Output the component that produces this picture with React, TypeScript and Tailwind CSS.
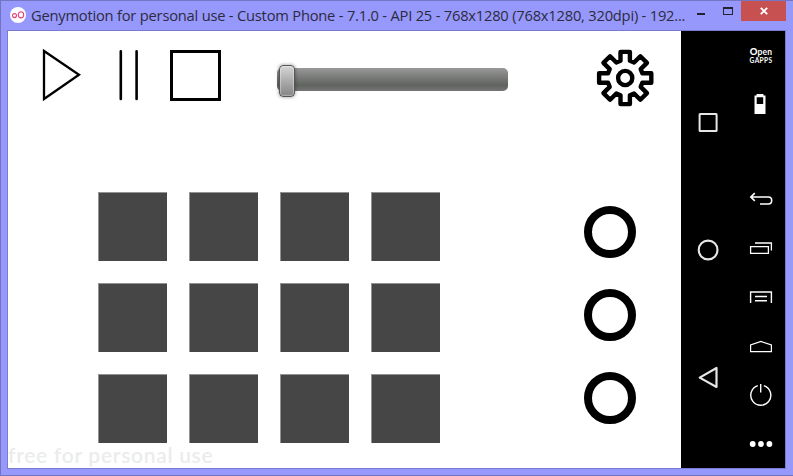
import type { ReactNode } from "react";

const gearPath = (() => {
  const tooth = [
    [-4.7, -17.2],
    [-4.7, -26.1],
    [4.7, -26.1],
    [4.7, -17.2],
  ];
  const points: string[] = [];
  for (let i = 0; i < 8; i++) {
    const a = (i * Math.PI) / 4;
    for (const [x, y] of tooth) {
      points.push(
        `${(x * Math.cos(a) - y * Math.sin(a)).toFixed(2)} ${(x * Math.sin(a) + y * Math.cos(a)).toFixed(2)}`,
      );
    }
  }
  return `M${points.join("L")}Z`;
})();

function TitleBar() {
  return (
    <header className="flex h-[30px] shrink-0 border-t border-[#7476c4] bg-[#9798fb] pr-[7px]">
      <svg className="ml-[9px] mt-[6px] h-[17px] w-[17px] shrink-0" viewBox="0 0 17 17" fill="none">
        <circle cx="8" cy="8" r="8" fill="#fff" />
        <circle cx="4.5" cy="8.6" r="2" stroke="#e6417b" strokeWidth="1.1" />
        <ellipse cx="11" cy="7.8" rx="2.7" ry="3.1" stroke="#e6417b" strokeWidth="1.1" />
      </svg>
      <h1 className="ml-[4px] mt-[3px] h-[22px] w-[660px] shrink-0 whitespace-nowrap text-[14.7px] leading-[22px] tracking-[-0.21px] text-[#2b2b3f]">
        Genymotion for personal use - Custom Phone - 7.1.0 - API 25 - 768x1280 (768x1280, 320dpi) - 192...
      </h1>
      <div className="ml-[6px] mt-[12px] h-[2px] w-[8px] shrink-0 bg-[#23232f]" />
      <div className="ml-[18px] mt-[6px] h-[8px] w-[10px] shrink-0 border border-t-2 border-[#23232f]" />
      <div className="ml-auto flex h-[20px] w-[45px] shrink-0 items-center justify-center bg-[#c75050]">
        <svg className="h-[8px] w-[8px]" viewBox="0 0 8 8" stroke="#fff" strokeWidth="1.9">
          <path d="M.8 .8L7.2 7.2M7.2 .8L.8 7.2" />
        </svg>
      </div>
    </header>
  );
}

function Slider() {
  return (
    <div className="ml-[56px] mt-[37px] flex h-[23px] w-[231px] items-center rounded-[5px] bg-linear-to-b from-[#999] via-[#60635f] via-75% to-[#747674] pl-[2px]">
      <div className="mt-[2px] h-[32px] w-[16px] shrink-0 rounded-[4px] border border-[#555] bg-linear-to-b from-[#d5d5d5] to-[#858585] shadow-[0_0_3px_1px_rgba(0,0,0,0.25),inset_0_0_1px_1px_rgba(255,255,255,0.35)]" />
    </div>
  );
}

function Transport() {
  return (
    <div className="flex h-[161px] shrink-0">
      <svg className="ml-[33px] mt-[16px] h-[56px] w-[42px]" viewBox="0 0 42 56" fill="none" stroke="#000" strokeWidth="2.3">
        <path d="M3 4V52L38 27.7Z" />
      </svg>
      <svg className="ml-[35px] mt-[18px] h-[52px] w-[22px]" viewBox="0 0 22 52" fill="none" stroke="#000" strokeWidth="2.6" strokeLinecap="round">
        <path d="M2.8 2.3V50M18.6 2.3V50" />
      </svg>
      <div className="ml-[30px] mt-[19px] h-[51px] w-[51px] border-3 border-black" />
      <Slider />
      <svg className="ml-[87px] mt-[17px] h-[60px] w-[60px]" viewBox="-30.2 -30 60 60" fill="none" stroke="#000" strokeWidth="4.4" strokeLinejoin="round">
        <path d={gearPath} />
        <circle r="7.1" />
      </svg>
    </div>
  );
}

function Stage() {
  return (
    <main className="flex w-[673px] shrink-0 flex-col bg-white">
      <Transport />
      <div className="flex h-[251px] shrink-0">
        <div className="ml-[90px] grid grid-cols-[repeat(4,69px)] content-start gap-[22px]">
          {Array.from({ length: 12 }, (_, i) => (
            <div key={i} className="h-[69px] border-l border-t border-[#929292] bg-[#464646]" />
          ))}
        </div>
        <div className="ml-[144px] mt-[14px] flex flex-col gap-[31px]">
          {[0, 1, 2].map((i) => (
            <div key={i} className="h-[52px] w-[52px] rounded-full border-8 border-black" />
          ))}
        </div>
      </div>
      <p className="whitespace-nowrap font-['Lato',sans-serif] text-[21px] font-semibold leading-[24px] tracking-[0.7px] text-[#ebecec]">
        free for personal use
      </p>
    </main>
  );
}

function ToolIcon({ children }: { children: ReactNode }) {
  return (
    <div className="flex h-[49px] shrink-0 items-center justify-center">
      <svg className="h-[25px] w-[25px]" viewBox="0 0 25 25" fill="none" stroke="#fff" strokeWidth="1.2">
        {children}
      </svg>
    </div>
  );
}

function NavKeys() {
  return (
    <nav className="flex w-[55px] flex-col items-center">
      <svg className="mt-[80px] h-[24px] w-[24px]" viewBox="0 0 24 24" fill="none" stroke="#e6e6e6" strokeWidth="2">
        <rect x="2.6" y="3" width="17" height="17" rx=".5" />
      </svg>
      <svg className="mt-[103px] h-[24px] w-[24px]" viewBox="0 0 24 24" fill="none" stroke="#e6e6e6" strokeWidth="2.1">
        <circle cx="11.1" cy="12" r="9.4" />
      </svg>
      <svg className="mt-[103px] h-[24px] w-[24px]" viewBox="0 0 24 24" fill="none" stroke="#e6e6e6" strokeWidth="2.2" strokeLinejoin="round">
        <path d="M19.5 3V22L2.7 12.6Z" />
      </svg>
    </nav>
  );
}

function Toolbar() {
  return (
    <aside className="flex w-[49px] flex-col">
      <div className="flex h-[49px] shrink-0 flex-col items-center pt-[16px] pl-px font-['Lato',sans-serif] font-bold text-white">
        <span className="text-[8.5px] leading-[10px] tracking-[0.2px]">
          <b className="text-[9.5px] font-black">O</b>pen
        </span>
        <span className="text-[6.6px] leading-[7px] tracking-[0.35px]">GAPPS</span>
      </div>
      <ToolIcon>
        <path fill="#fff" stroke="none" fillRule="evenodd" d="M8.5 2H15.5V3.5H17.5V22H6.5V3.5H8.5ZM8.7 5.3V12H15.2V5.3Z" />
      </ToolIcon>
      <div className="h-[45px] shrink-0" />
      <ToolIcon>
        <path strokeWidth="1.6" d="M6.8 7.2L2.8 11L6.8 14.8M3 11H20.5C25 11 24.5 18 20.5 18H12" />
      </ToolIcon>
      <ToolIcon>
        <path d="M2.6 11.6H20.4V18.4H2.6ZM7 8H23.4V15.5" strokeWidth="1.3" />
      </ToolIcon>
      <ToolIcon>
        <path d="M2.6 19V8H23.4V19M7 12.5H19M7 16.8H19" strokeWidth="1.4" />
      </ToolIcon>
      <ToolIcon>
        <path d="M2.6 18.6V12L13 8.5L23.4 12V18.6Z" />
      </ToolIcon>
      <ToolIcon>
        <path d="M9.8 3.7A10 10 0 1 0 15.8 3.7M12.7 2V10.5" strokeWidth="1.4" />
      </ToolIcon>
      <ToolIcon>
        <g fill="#fff" stroke="none">
          <circle cx="4.7" cy="13" r="2.9" />
          <circle cx="13" cy="13" r="2.9" />
          <circle cx="21.4" cy="13" r="2.9" />
        </g>
      </ToolIcon>
    </aside>
  );
}

export default function App() {
  return (
    <div className="flex h-[476px] w-[793px] flex-col overflow-hidden border-b border-l border-[#7274c2] bg-[#9798fb] font-['Open_Sans','Noto_Sans',sans-serif]">
      <TitleBar />
      <div className="ml-[6px] flex h-[439px] w-[779px] shrink-0 overflow-hidden border border-[#797bd0]">
        <Stage />
        <div className="flex w-[104px] shrink-0 bg-black">
          <NavKeys />
          <Toolbar />
        </div>
      </div>
    </div>
  );
}
